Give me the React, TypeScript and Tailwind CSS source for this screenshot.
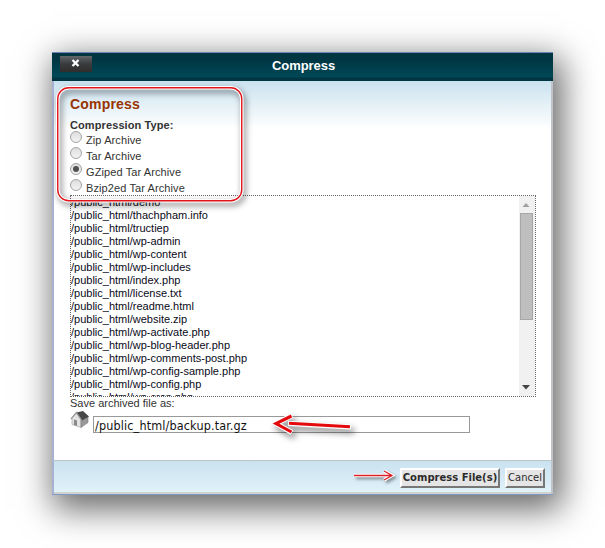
const archiveTypes = ['Zip Archive', 'Tar Archive', 'GZiped Tar Archive', 'Bzip2ed Tar Archive'];

const files = [
  'demo', 'thachpham.info', 'tructiep', 'wp-admin', 'wp-content', 'wp-includes', 'index.php',
  'license.txt', 'readme.html', 'website.zip', 'wp-activate.php', 'wp-blog-header.php',
  'wp-comments-post.php', 'wp-config-sample.php', 'wp-config.php', 'wp-cron.php',
];

function Radio({ checked }: { checked: boolean }) {
  return (
    <span className="-mt-[6px] flex h-3 w-3 shrink-0 items-center justify-center rounded-full border border-[#a3a3a3] bg-linear-to-b from-[#dedede] to-[#f3f3f3]">
      {checked && <span className="h-1.5 w-1.5 rounded-full bg-[#505050]" />}
    </span>
  );
}

function TitleBar() {
  return (
    <header className="flex h-[29px] shrink-0 items-start border-t border-[#7186b4] bg-linear-to-b from-[#003541] from-20% via-[#004857] via-85% to-[#003541] to-90%">
      <button className="mt-[3px] ml-2 flex h-4 w-8 items-center justify-center bg-linear-to-b from-[#62676a] via-[#393b3d] via-50% to-[#302d2d]">
        <svg width="9" height="8" viewBox="0 0 9 8" className="-mt-0.5 -ml-0.5">
          <path d="M1.5 1 L7.5 7 M7.5 1 L1.5 7" stroke="#fff" strokeWidth="2.3" />
        </svg>
      </button>
      <h1 className="mr-[38px] flex-1 pt-[5px] text-center text-[13px] leading-4 font-bold tracking-[-0.05px] text-white">
        Compress
      </h1>
    </header>
  );
}

function FileList() {
  return (
    <div className="flex h-[202px] w-[466px] shrink-0 overflow-hidden border border-dotted border-[#666]">
      <div className="mt-[5px] flex-1 overflow-hidden">
        <ul className="-mt-[5px] text-[11px] leading-[13px] text-[#0a0a18]">
          {files.map((file) => (
            <li key={file} className="h-[13px] whitespace-nowrap">/public_html/{file}</li>
          ))}
        </ul>
      </div>
      <div className="flex w-[16px] flex-col items-center bg-[#f1f1f1] pr-[2px]">
        <svg width="14" height="17" className="shrink-0">
          <path d="M3.5 11 L7 7 L10.5 11Z" fill="#a0a0a0" />
        </svg>
        <div className="h-[107px] w-[13px] shrink-0 border border-[#a7a7a7] bg-[#bebebe]" />
        <svg width="14" height="17" className="mt-auto shrink-0">
          <path d="M3 6 L7 10.5 L11 6Z" fill="#454545" />
        </svg>
      </div>
    </div>
  );
}

function House() {
  return (
    <svg width="20" height="19" viewBox="0 0 20 19" className="shrink-0">
      <path d="M2 8 L6.500 3 L11 10 V17.500 L2 14.500Z" fill="#e2e2e2" stroke="#aaa" strokeWidth=".7" />
      <path d="M11 10 L18 6 V12.500 L11 17.500Z" fill="#999" stroke="#777" strokeWidth=".6" />
      <path d="M6.5 2.500 L13 1 L19 6.500 L12 10.500Z" fill="#484848" />
      <path d="M0.8 9 L6.500 2.500 L12 10.500" fill="none" stroke="#8d8d8d" strokeWidth="1.1" />
      <path d="M4 9.500 L7 10.500 V16 L4 15Z" fill="#8a8a8a" />
    </svg>
  );
}

function BigArrow() {
  return (
    <svg width="90" height="36" viewBox="0 0 90 36" className="absolute top-[408px] left-[267px] drop-shadow-[3px_4px_3px_rgba(0,0,0,.5)]">
      <g fill="none" strokeLinejoin="miter">
        <path d="M25 7.500 L9 15.500 L25 24.500 M21 15.300 L84 19" stroke="#fff" strokeWidth="5.200" />
        <path d="M24.500 8 L9 15.500 L24.500 24 M22 15.300 L83 18.700" stroke="#e3090d" strokeWidth="3.100" />
      </g>
    </svg>
  );
}

function SmallArrow() {
  return (
    <svg width="46" height="22" viewBox="0 0 46 22" className="mr-[3px] mb-[3px] drop-shadow-[2px_2px_1.5px_rgba(0,0,0,.4)]">
      <g fill="none">
        <path d="M3 10.500 H41 M33 6 L41 10.500 L33 15" stroke="#fff" strokeWidth="3.3" />
        <path d="M3 10.500 H41 M33 6 L41 10.500 L33 15" stroke="#dc2027" strokeWidth="1.300" />
      </g>
    </svg>
  );
}

function Highlight() {
  return (
    <svg width="200" height="130" viewBox="0 0 200 130" className="absolute top-[82px] left-[52px] drop-shadow-[2px_3px_3px_rgba(0,0,0,.55)]">
      <rect x="5.750" y="5.750" width="184" height="113" rx="11" fill="none" stroke="#fff" strokeWidth="3.500" />
      <rect x="5.750" y="5.750" width="184" height="113" rx="11" fill="none" stroke="#e0151c" strokeWidth="1.400" />
    </svg>
  );
}

export default function App() {
  return (
    <main className="h-[548px] w-[605px] overflow-hidden bg-white pt-[52px] pl-[52px] font-['Liberation_Sans',Arial,sans-serif]">
      <section className="flex h-[443px] w-[501px] flex-col border-b border-[#7f98c7] bg-white shadow-[5px_10px_32px_4px_rgba(0,0,0,.6)]">
        <TitleBar />
        <div className="flex flex-1 flex-col border-r-2 border-l-2 border-r-[#c0c4c8] border-l-[#a9b1d3] bg-linear-to-b from-[#cae2ef] to-white to-[48px] pl-4">
          <h2 className="mt-[15px] h-[23px] text-[14px] leading-4 font-bold tracking-[0.2px] text-[#993300]">Compress</h2>
          <p className="h-[13px] text-[11px] leading-[13px] font-bold tracking-[0.1px] text-[#333]">Compression Type:</p>
          <div className="h-[63px]">
            {archiveTypes.map((type, i) => (
              <div key={type} className="flex h-4 items-center gap-1 text-[11px] leading-4 tracking-[0.1px] text-[#333]">
                <Radio checked={i === 2} />
                <span>{type}</span>
              </div>
            ))}
          </div>
          <FileList />
          <p className="-mt-px h-[14px] text-[11px] leading-[14px] text-[#333]">Save archived file as:</p>
          <div className="flex items-start gap-[3px]">
            <House />
            <div className="mt-[6px] h-[17px] w-[377px] border border-[#999] bg-white pl-px font-['DejaVu_Sans_Condensed','DejaVu_Sans',sans-serif] text-[12.5px] leading-[17px] tracking-[0.14px] text-[#111]">
              /public_html/backup.tar.gz
            </div>
          </div>
        </div>
        <footer className="flex h-[34px] shrink-0 items-center justify-end border-t border-r-2 border-l-2 border-t-[#bac5cc] border-r-[#c0c4c8] border-l-[#a9b1d3] bg-linear-to-b from-[#cae2f0] to-[#e2f3fa] pr-1.5 font-['DejaVu_Sans',sans-serif] text-[10px] text-[#2c2c2c] shadow-[inset_0_-2px_0_#d2d3cc]">
          <SmallArrow />
          <button className="mr-[5px] h-5 w-[100px] border-2 border-t-white border-r-[#777] border-b-[#777] border-l-white bg-[#e5e5e5] leading-4 font-bold whitespace-nowrap">Compress File(s)</button>
          <button className="flex h-5 w-10 justify-center border-2 border-t-white border-r-[#777] border-b-[#777] border-l-white bg-[#e5e5e5] leading-4">Cancel</button>
        </footer>
      </section>
      <Highlight />
      <BigArrow />
    </main>
  );
}
